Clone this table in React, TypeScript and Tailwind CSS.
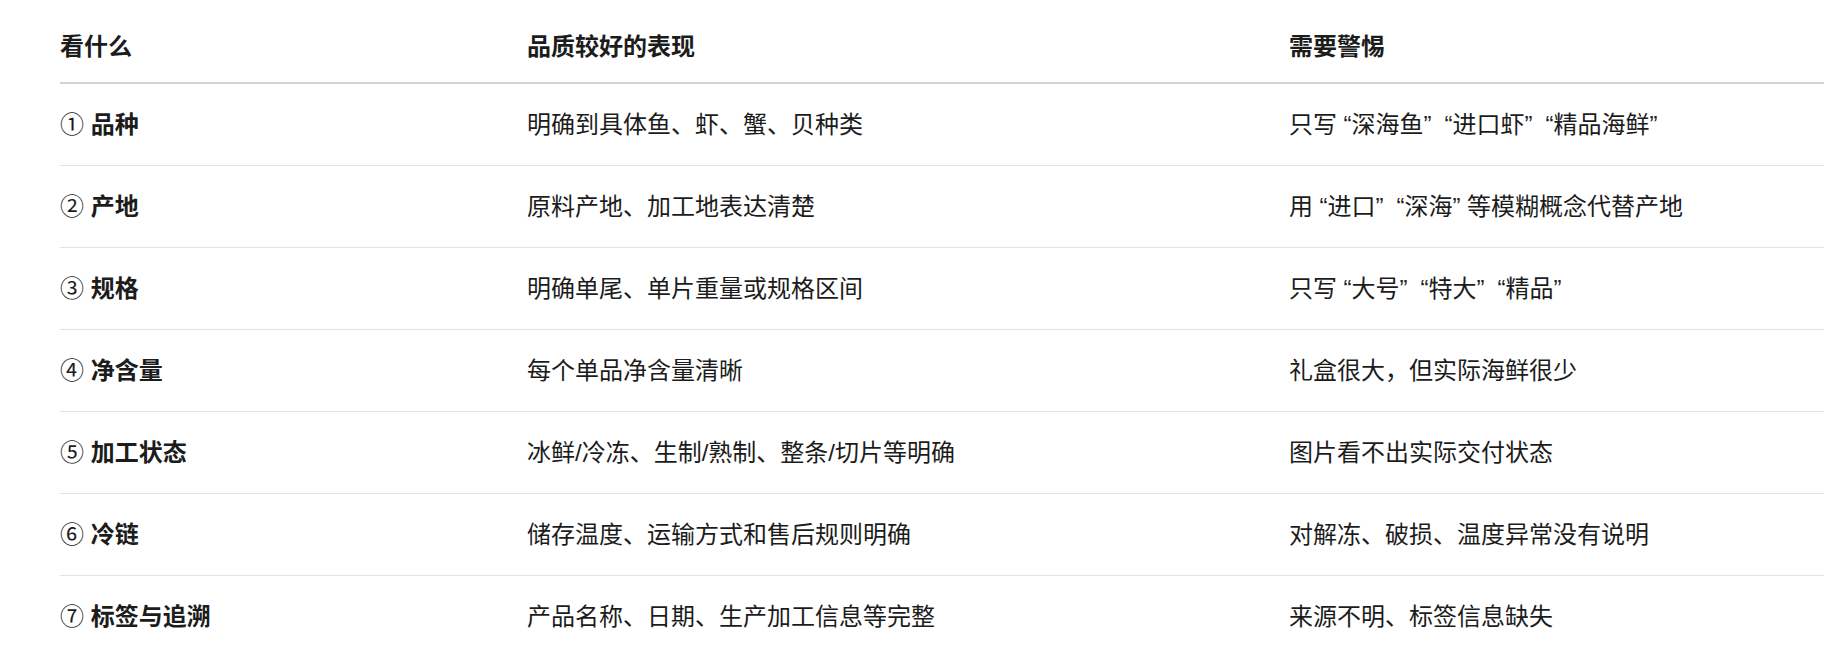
import React from "react"

// Inspection table: what to check, good signs, red flags
const rows = [
  { no: "①", item: "品种", good: "明确到具体鱼、虾、蟹、贝种类", warn: "只写“深海鱼”“进口虾”“精品海鲜”" },
  { no: "②", item: "产地", good: "原料产地、加工地表达清楚", warn: "用“进口”“深海”等模糊概念代替产地" },
  { no: "③", item: "规格", good: "明确单尾、单片重量或规格区间", warn: "只写“大号”“特大”“精品”" },
  { no: "④", item: "净含量", good: "每个单品净含量清晰", warn: "礼盒很大，但实际海鲜很少" },
  { no: "⑤", item: "加工状态", good: "冰鲜/冷冻、生制/熟制、整条/切片等明确", warn: "图片看不出实际交付状态" },
  { no: "⑥", item: "冷链", good: "储存温度、运输方式和售后规则明确", warn: "对解冻、破损、温度异常没有说明" },
  { no: "⑦", item: "标签与追溯", good: "产品名称、日期、生产加工信息等完整", warn: "来源不明、标签信息缺失" },
]

// curly quotes get a fixed box, like the proportional quotes in the original font
const Quoted = ({ text }: { text: string }) => (
  <>
    {text.split(/([“”])/).map((part, i) =>
      part === "“" ? (
        <span key={i} className="inline-block w-[14.5px] text-right">“</span>
      ) : part === "”" ? (
        <span key={i} className="inline-block w-[14.5px] text-left">”</span>
      ) : (
        <span key={i}>{part}</span>
      )
    )}
  </>
)

export default function App() {
  return (
    <div
      className="min-h-screen bg-white pl-[60px] text-[#1c1c1c] overflow-hidden"
      style={{ fontFamily: '"Liberation Sans", "Noto Sans CJK SC", sans-serif' }}
    >
      <table className="w-full border-collapse text-left text-[24px]">
        <colgroup>
          <col className="w-[467px]" />
          <col className="w-[762px]" />
          <col />
        </colgroup>
        <thead>
          <tr className="border-b-2 border-[#d4d4d4]">
            <th className="pt-[34px] pb-[22px] leading-[26px] font-bold">看什么</th>
            <th className="pt-[34px] pb-[22px] leading-[26px] font-bold">品质较好的表现</th>
            <th className="pt-[34px] pb-[22px] leading-[26px] font-bold">需要警惕</th>
          </tr>
        </thead>
        <tbody>
          {rows.map((r) => (
            <tr key={r.no} className="border-b border-[#e3e3e3] last:border-b-0">
              <td className="py-[27px] leading-[27px] whitespace-nowrap">
                <span className="font-normal">{r.no}</span>
                <span className="font-bold"> {r.item}</span>
              </td>
              <td className="py-[27px] leading-[27px] whitespace-nowrap">{r.good}</td>
              <td className="py-[27px] leading-[27px] whitespace-nowrap">
                <Quoted text={r.warn} />
              </td>
            </tr>
          ))}
        </tbody>
      </table>
    </div>
  )
}
